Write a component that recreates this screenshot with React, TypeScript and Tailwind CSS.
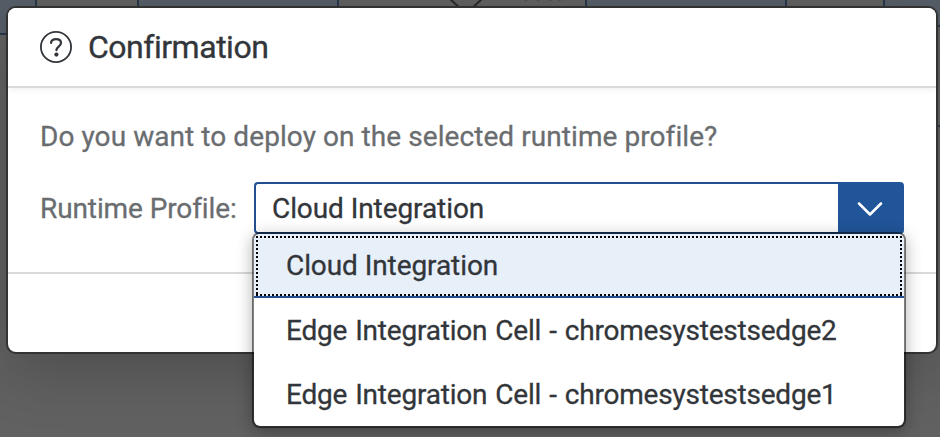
import React from "react";

const edgeCells = [
  "Edge Integration Cell - chromesystestsedge2",
  "Edge Integration Cell - chromesystestsedge1",
];

function Backdrop() {
  return (
    <svg className="absolute inset-0" width="940" height="437" viewBox="0 0 940 437" aria-hidden="true">
      <rect width="940" height="437" fill="#616161" />
      <g fill="#555d66" stroke="#26374b" strokeWidth="2">
        <rect x="-5" y="-5" width="41" height="39" />
        <rect x="138" y="-5" width="200" height="39" />
        <rect x="586" y="-5" width="200" height="39" />
        <rect x="884" y="-5" width="70" height="31" />
        <path d="M930 126H940" />
      </g>
      <path d="M449 -2L462 10H470L483 -2" fill="none" stroke="#292929" strokeWidth="2" />
      <path d="M524 0h3M537 0h3M549 0h3M558 0h3" stroke="#454545" strokeWidth="1" />
    </svg>
  );
}

function Header() {
  return (
    <header className="relative z-10 flex h-20 shrink-0 items-center gap-[15px] rounded-t-lg border-b-2 border-[#d9d9d9] bg-white pl-8 text-[#32363a] shadow-[0_2px_6px_rgba(0,0,0,0.06)]">
      <svg className="mt-px" width="33" height="33" viewBox="0 0.5 33 33" fill="none" stroke="currentColor">
        <circle cx="16" cy="16.5" r="15.1" strokeWidth="1.8" />
        <path d="M11 12.3C11.3 9.9 13.4 8.6 16.1 8.6C19 8.6 21 10.1 21 12.5C21 16.1 16.4 16.1 16.4 19.7" strokeWidth="2.2" strokeLinecap="round" />
        <circle cx="16.4" cy="24.1" r="2.1" fill="currentColor" stroke="none" />
      </svg>
      <h1 className="text-[32px] leading-10 tracking-[-0.48px] [-webkit-text-stroke:0.35px]">Confirmation</h1>
    </header>
  );
}

function ProfileMenu() {
  return (
    <ul className="absolute top-[50px] -left-[2px] z-20 h-[196px] w-[654px] overflow-hidden rounded-lg border-2 border-black/50 bg-white bg-clip-padding text-[#32363a] shadow-[0_4px_16px_rgba(0,0,0,0.3)]">
      <li className="flex h-[64px] items-center border-b-2 border-[#20508f] bg-[#e7eff9]">
        <div className="relative flex h-[62px] w-full items-center pt-0.5 pl-8">
          <svg className="absolute inset-0" width="650" height="62" fill="none" stroke="black" strokeWidth="2" strokeDasharray="2 2">
            <path d="M2 3H648M2 61H648M3 2V62M647 2V62" />
          </svg>
          <span className="tracking-[-0.08px]">Cloud Integration</span>
        </div>
      </li>
      {edgeCells.map((name) => (
        <li key={name} className="flex h-16 items-center pt-0.5 pl-8 tracking-[-0.21px] [word-spacing:1.3px]">
          {name}
        </li>
      ))}
    </ul>
  );
}

export default function App() {
  return (
    <main className="relative h-[437px] w-[940px] overflow-hidden bg-[#606060] p-2 font-[Roboto,'Liberation_Sans',sans-serif] text-[28px] leading-9 [-webkit-text-stroke:0.3px]">
      <Backdrop />
      <section className="relative flex h-[344px] w-[928px] flex-col rounded-lg bg-white shadow-[0_0_0_2px_#333333,0_20px_60px_rgba(0,0,0,0.2)]">
        <Header />
        <div className="flex h-[186px] shrink-0 flex-col border-b-2 border-[#d9d9d9] px-8 pt-[31px] text-[#6a6d70]">
          <p className="tracking-[0.07px] whitespace-nowrap">Do you want to deploy on the selected runtime profile?</p>
          <div className="relative mt-[27px] flex h-[52px] items-center">
            <label className="w-[214px] shrink-0 pt-0.5 tracking-[-0.1px] whitespace-nowrap">Runtime Profile:</label>
            <div className="relative flex h-[52px] w-[650px]">
              <div className="flex flex-1 items-center rounded-l border-2 border-r-0 border-[#20508f] bg-white pt-0.5 pl-4 text-[#32363a]">
                <span className="tracking-[-0.08px]">Cloud Integration</span>
              </div>
              <button className="flex w-[66px] items-center justify-center rounded-r bg-[#215599] pt-0.5 pr-0.5" aria-label="Open profiles">
                <svg width="26" height="14" viewBox="0 0 26 14" fill="none" stroke="white" strokeWidth="2.5" strokeLinecap="round" strokeLinejoin="round">
                  <path d="M2 1.5L13 12.5L24 1.5" />
                </svg>
              </button>
              <ProfileMenu />
            </div>
          </div>
        </div>
        <footer className="flex-1" />
      </section>
    </main>
  );
}
